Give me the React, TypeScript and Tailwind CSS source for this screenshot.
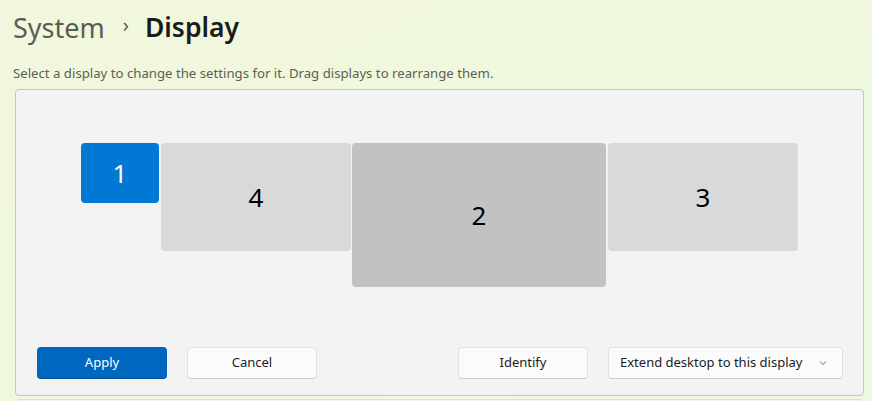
import React from "react";

const font = { fontFamily: '"Segoe UI", "Noto Sans", "Open Sans", sans-serif' };

function Monitor({ n, x, y, w, h, cls, text }: { n: string; x: number; y: number; w: number; h: number; cls: string; text: string }) {
  return (
    <div
      className={`absolute flex items-center justify-center rounded-[4px] ${cls}`}
      style={{ left: x, top: y, width: w, height: h }}
    >
      <span className={`text-[26px] leading-none ${text}`}>{n}</span>
    </div>
  );
}

export default function App() {
  return (
    <div
      className="w-[872px] h-[401px] overflow-hidden bg-gradient-to-br from-[#f1f7dc] via-[#eff8df] to-[#eef8e0]"
      style={font}
    >
      <div className="flex items-center h-[52px] pl-[13px] pt-[2px]">
        <span className="text-[27px] text-[#5b5d55] leading-none">System</span>
        <span className="text-[20px] text-[#5b5d55] ml-[18px] mr-[16px] leading-none pb-[4px]">›</span>
        <span className="text-[26.5px] font-semibold text-[#1b1b1b] leading-none">Display</span>
      </div>
      <div className="pl-[13px] pt-[12px] text-[13.2px] text-[#5c5e57] leading-[18px]">
        Select a display to change the settings for it. Drag displays to rearrange them.
      </div>
      <div className="ml-[15px] mt-[7px] w-[849px] h-[307px] bg-[#f3f3f3] border border-[#c5c7b9] rounded-[4px] flex flex-col">
        <div className="relative h-[245px]">
          <Monitor n="1" x={65} y={53} w={78} h={60} cls="bg-[#0078d4]" text="text-white" />
          <Monitor n="4" x={145} y={53} w={190} h={108} cls="bg-[#d9d9d9]" text="text-black" />
          <Monitor n="2" x={336} y={53} w={254} h={144} cls="bg-[#c2c2c2]" text="text-black" />
          <Monitor n="3" x={592} y={53} w={190} h={108} cls="bg-[#d9d9d9]" text="text-black" />
        </div>
        <div className="flex items-center pl-[21px] pr-[20px] mt-[12px] text-[13px]">
          <button className="w-[130px] h-[32px] rounded-[4px] bg-[#0067c0] border-b border-[#0a4f8f] text-white">
            Apply
          </button>
          <button className="ml-[20px] w-[130px] h-[32px] rounded-[4px] bg-[#fbfbfb] border border-[#e1e1e1] border-b-[#cdcdcd] text-[#1b1b1b]">
            Cancel
          </button>
          <div className="flex-1" />
          <button className="w-[130px] h-[32px] rounded-[4px] bg-[#fbfbfb] border border-[#e1e1e1] border-b-[#cdcdcd] text-[#1b1b1b]">
            Identify
          </button>
          <button className="ml-[20px] w-[235px] h-[32px] rounded-[4px] bg-[#fbfbfb] border border-[#e1e1e1] border-b-[#cdcdcd] text-[#1b1b1b] flex items-center pl-[11px] pr-[14px]">
            <span className="flex-1 text-left">Extend desktop to this display</span>
            <svg width="10" height="10" viewBox="0 0 10 10" className="ml-2">
              <path d="M2 3.5 L5 6.5 L8 3.5" stroke="#5f5f5f" strokeWidth="1" fill="none" />
            </svg>
          </button>
        </div>
      </div>
      <div className="ml-[15px] mt-[3px] w-[849px] h-[20px] bg-[#f3f3f3] border border-[#dfe3d2] rounded-[4px]" />
    </div>
  );
}
